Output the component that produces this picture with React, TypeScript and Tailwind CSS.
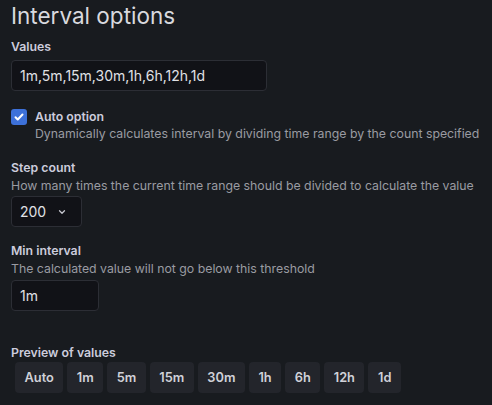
import React from "react";

function Chevron() {
  return (
    <svg width="10" height="10" viewBox="0 0 24 24" fill="none" stroke="#c7c8cf" strokeWidth="3" strokeLinecap="round" strokeLinejoin="round">
      <path d="M6 9l6 6 6-6" />
    </svg>
  );
}

export default function App() {
  const chips = ["Auto", "1m", "5m", "15m", "30m", "1h", "6h", "12h", "1d"];
  return (
    <div className="min-h-screen w-[492px] h-[405px] overflow-hidden bg-[#181b1f] pl-[11px] pt-[2px] text-[#ccccdc]" style={{ fontFamily: "Inter, 'Noto Sans', sans-serif" }}>
      <h2 className="text-[22.5px] leading-[28px] font-normal text-[#d8d9de]">Interval options</h2>

      <div className="mt-[8px] text-[12.3px] leading-[18px] font-semibold text-[#ccccdc]">Values</div>
      <div className="mt-[4px] flex h-[31px] w-[256px] items-center rounded-[4px] border border-[#2c2e35] bg-[#111217] px-[8px] text-[14px] text-[#e0e1e6]">
        1m,5m,15m,30m,1h,6h,12h,1d
      </div>

      <div className="mt-[18px] flex gap-[8px]">
        <div className="flex h-[16px] w-[16px] shrink-0 items-center justify-center rounded-[3px] bg-[#3d71d9]">
          <svg width="12" height="12" viewBox="0 0 24 24" fill="none" stroke="#ffffff" strokeWidth="4" strokeLinecap="round" strokeLinejoin="round">
            <path d="M5 12.5l4.5 4.5L19 7" />
          </svg>
        </div>
        <div>
          <div className="text-[12.3px] leading-[16px] font-semibold text-[#ccccdc]">Auto option</div>
          <div className="whitespace-nowrap text-[12.3px] leading-[18px] text-[#9a9ba2]">Dynamically calculates interval by dividing time range by the count specified</div>
        </div>
      </div>

      <div className="mt-[16px] text-[12.3px] leading-[18px] font-semibold text-[#ccccdc]">Step count</div>
      <div className="whitespace-nowrap text-[12.3px] leading-[18px] text-[#9a9ba2]">How many times the current time range should be divided to calculate the value</div>
      <div className="mt-[1px] flex h-[31px] w-[71px] items-center justify-between rounded-[4px] border border-[#2c2e35] bg-[#111217] pl-[8px] pr-[14px] text-[14px] text-[#e0e1e6]">
        <span>200</span>
        <Chevron />
      </div>

      <div className="mt-[15px] text-[12.3px] leading-[18px] font-semibold text-[#ccccdc]">Min interval</div>
      <div className="whitespace-nowrap text-[12.3px] leading-[18px] text-[#9a9ba2]">The calculated value will not go below this threshold</div>
      <div className="mt-[2px] flex h-[31px] w-[88px] items-center rounded-[4px] border border-[#2c2e35] bg-[#111217] px-[8px] text-[14px] text-[#e0e1e6]">
        1m
      </div>

      <div className="mt-[33px] text-[12.3px] leading-[18px] font-semibold text-[#ccccdc]">Preview of values</div>
      <div className="ml-[4px] flex gap-[4px]">
        {chips.map((c) => (
          <div key={c} className="flex h-[31px] items-center rounded-[4px] bg-[#23252b] px-[9.5px] text-[12.8px] font-semibold text-[#d0d1d8]">
            {c}
          </div>
        ))}
      </div>
    </div>
  );
}
